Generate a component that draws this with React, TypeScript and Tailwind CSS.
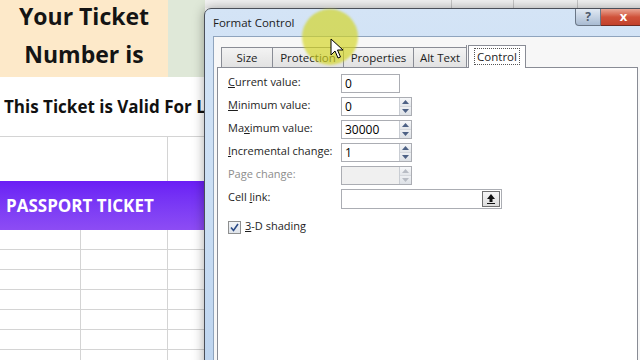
import React from 'react';

// Spinner arrows beside the numeric boxes
const Spin = ({ disabled }: { disabled?: boolean }) => (
  <div className="flex w-[12px] flex-col border-l border-[#c9cdd3]">
    <div className="flex flex-1 items-center justify-center border-b border-[#d5d8dd] bg-gradient-to-b from-[#f7f8fa] to-[#e3e6ea]">
      <svg width="7" height="4" viewBox="0 0 7 4"><path d="M0 4 L3.5 0 L7 4 Z" fill={disabled ? '#b8bcc4' : '#4d6185'} /></svg>
    </div>
    <div className="flex flex-1 items-center justify-center bg-gradient-to-b from-[#eef0f3] to-[#dde1e6]">
      <svg width="7" height="4" viewBox="0 0 7 4"><path d="M0 0 L3.5 4 L7 0 Z" fill={disabled ? '#b8bcc4' : '#4d6185'} /></svg>
    </div>
  </div>
);

const Field = ({ value, spin = true, disabled }: { value?: string; spin?: boolean; disabled?: boolean }) => (
  <div
    className={`flex h-[19px] border border-[#abadb3] ${spin ? 'w-[71px]' : 'w-[59px]'} ${disabled ? 'bg-[#f0f0f0]' : 'bg-white'}`}
  >
    <div className="flex flex-1 items-center pl-[3px] text-[12px] text-black">{value}</div>
    {spin && <Spin disabled={disabled} />}
  </div>
);

const Row = ({ label, children, gray }: { label: React.ReactNode; children: React.ReactNode; gray?: boolean }) => (
  <div className="flex h-[19px] items-center">
    <div className={`w-[113px] -mt-[2px] text-[11px] ${gray ? 'text-[#8d8d8d]' : 'text-[#1e1e1e]'}`}>{label}</div>
    {children}
  </div>
);

const Tab = ({ label, active }: { label: string; active?: boolean }) =>
  active ? (
    <div className="z-10 -mb-px ml-[1px] flex h-[23px] w-[58px] items-start justify-center border border-b-0 border-[#898c95] bg-white pt-[2px]">
      <span className="border border-dotted border-[#555] px-[2px] leading-[15px]">{label}</span>
    </div>
  ) : (
    <div className="mt-[2px] flex h-[20px] items-center justify-center border border-b-0 border-r-0 border-[#898c95] bg-gradient-to-b from-[#f3f3f3] to-[#e2e2e2]">
      {label}
    </div>
  );

function Dialog() {
  return (
    <div className="absolute left-[204px] top-[8px] z-10 h-[380px] w-[452px] rounded-t-[7px] border border-[#4a4f59] bg-gradient-to-b from-[#d4e4f6] via-[#cadef4] to-[#bcd3ee] shadow-[0_0_12px_rgba(0,0,0,0.35)]">
      {/* title bar */}
      <div className="flex h-[27px] items-start">
        <div className="pl-[8px] pt-[5px] text-[11.5px] text-[#1c1c1c]">Format Control</div>
        <div className="ml-auto mr-[8px] flex">
          <div className="flex h-[17px] w-[26px] items-center justify-center rounded-bl-[4px] border border-t-0 border-[#6a7686] bg-gradient-to-b from-[#e1e9f3] to-[#a9bbd2] text-[12px] font-bold text-[#4e5a6c]">
            ?
          </div>
          <div className="flex h-[17px] w-[46px] items-center justify-center rounded-br-[4px] border border-l-0 border-t-0 border-[#6d2a22] bg-gradient-to-b from-[#e8a493] via-[#d0523a] to-[#c2412c] text-[13px] font-bold text-white">
            x
          </div>
        </div>
      </div>
      {/* client area */}
      <div className="ml-[8px] h-full border-l border-t border-[#8fa4bd] bg-[#f7f7f7] pl-[3px] pt-[9px]">
        <div className="ml-[4px] flex h-[21px] items-end text-[11.5px] text-[#1e1e1e]">
          <div className="flex">
            <div className="w-[51px]"><Tab label="Size" /></div>
            <div className="w-[71px]"><Tab label="Protection" /></div>
            <div className="w-[70px]"><Tab label="Properties" /></div>
            <div className="w-[54px] border-r border-[#898c95]"><Tab label="Alt Text" /></div>
          </div>
          <Tab label="Control" active />
        </div>
        <div className="h-full w-[421px] border border-[#898c95] bg-white pl-[10px] pt-[6px]">
          <div className="flex flex-col gap-[4px]">
            <Row label={<><u>C</u>urrent value:</>}>
              <Field value="0" spin={false} />
            </Row>
            <Row label={<><u>M</u>inimum value:</>}>
              <Field value="0" />
            </Row>
            <Row label={<>Ma<u>x</u>imum value:</>}>
              <Field value="30000" />
            </Row>
            <Row label={<><u>I</u>ncremental change:</>}>
              <Field value="1" />
            </Row>
            <Row label="Page change:" gray>
              <Field disabled />
            </Row>
            <Row label={<>Cell <u>l</u>ink:</>}>
              <div className="flex h-[20px] w-[161px] border border-[#abadb3] bg-white">
                <div className="flex-1" />
                <div className="m-[1px] flex w-[18px] items-center justify-center border border-[#707070] bg-gradient-to-b from-[#f6f6f6] to-[#dddddd]">
                  <svg width="10" height="11" viewBox="0 0 10 11">
                    <path d="M5 1 L9 6 L6.5 6 L6.5 9 L3.5 9 L3.5 6 L1 6 Z" fill="#111" />
                    <rect x="1" y="10" width="8" height="1" fill="#111" />
                  </svg>
                </div>
              </div>
            </Row>
          </div>
          <div className="mt-[12px] flex items-center gap-[4px] text-[11px] text-[#1e1e1e]">
            <div className="flex h-[13px] w-[13px] items-center justify-center border border-[#8e8f8f] bg-gradient-to-b from-[#f2f4f7] to-[#dfe4ea]">
              <svg width="9" height="9" viewBox="0 0 9 9">
                <path d="M1 4.5 L3.5 7.5 L8 1" fill="none" stroke="#2a4a86" strokeWidth="1.6" />
              </svg>
            </div>
            <span className="-mt-[2px]">
              <u>3</u>-D shading
            </span>
          </div>
        </div>
      </div>
    </div>
  );
}

function Sheet() {
  const rows = [0, 1, 2, 3, 4, 5, 6];
  return (
    <div className="flex h-full w-full">
      <div className="flex w-[205px] shrink-0 flex-col">
        <div className="flex h-[77px] shrink-0">
          <div className="flex w-[168px] flex-col items-center bg-[#fde9c9] text-[23px] font-bold leading-[38px] text-[#141414]">
            <div className="-mt-[3px]">Your Ticket</div>
            <div>Number is</div>
          </div>
          <div className="flex-1 bg-[#dfe8d8]" />
        </div>
        <div className="flex h-[60px] shrink-0 items-center border-b border-[#d4d4d4] bg-white pl-[4px] whitespace-nowrap text-[17px] font-bold text-[#111]">
          This Ticket is Valid For Life
        </div>
        <div className="flex h-[44px] shrink-0 bg-white">
          <div className="w-[168px] border-r border-[#d4d4d4]" />
        </div>
        <div className="flex h-[49px] shrink-0 items-center bg-gradient-to-b from-[#6a1df5] to-[#8d4cf4] pl-[6px] text-[17px] font-bold text-white">
          PASSPORT TICKET
        </div>
        {rows.map((r) => (
          <div key={r} className="flex h-[20px] shrink-0 border-b border-[#d4d4d4] bg-white">
            <div className="w-[81px] border-r border-[#d4d4d4]" />
            <div className="w-[87px] border-r border-[#d4d4d4]" />
          </div>
        ))}
      </div>
      <div className="flex h-[8px] flex-1 bg-[#f3f3f3]">
        <div className="w-[247px] border-r border-[#c8c8c8]" />
        <div className="w-[62px] border-r border-[#c8c8c8]" />
        <div className="w-[64px] border-r border-[#c8c8c8]" />
      </div>
    </div>
  );
}

export default function App() {
  return (
    <div className="relative h-[360px] w-[640px] overflow-hidden bg-white" style={{ fontFamily: '"Open Sans", "Noto Sans", sans-serif' }}>
      <Sheet />
      <Dialog />
      {/* cursor highlight */}
      <div className="pointer-events-none absolute left-[302px] top-[9px] z-20 h-[56px] w-[56px] rounded-full bg-[#d2d41c]/65 blur-[1px]" />
      <svg className="absolute left-[330px] top-[38px] z-30" width="14" height="22" viewBox="0 0 14 22">
        <path d="M1 1 L1 17 L5 13 L8 20 L10.5 19 L7.5 12 L13 12 Z" fill="#fff" stroke="#000" strokeWidth="1" strokeLinejoin="round" />
      </svg>
    </div>
  );
}
